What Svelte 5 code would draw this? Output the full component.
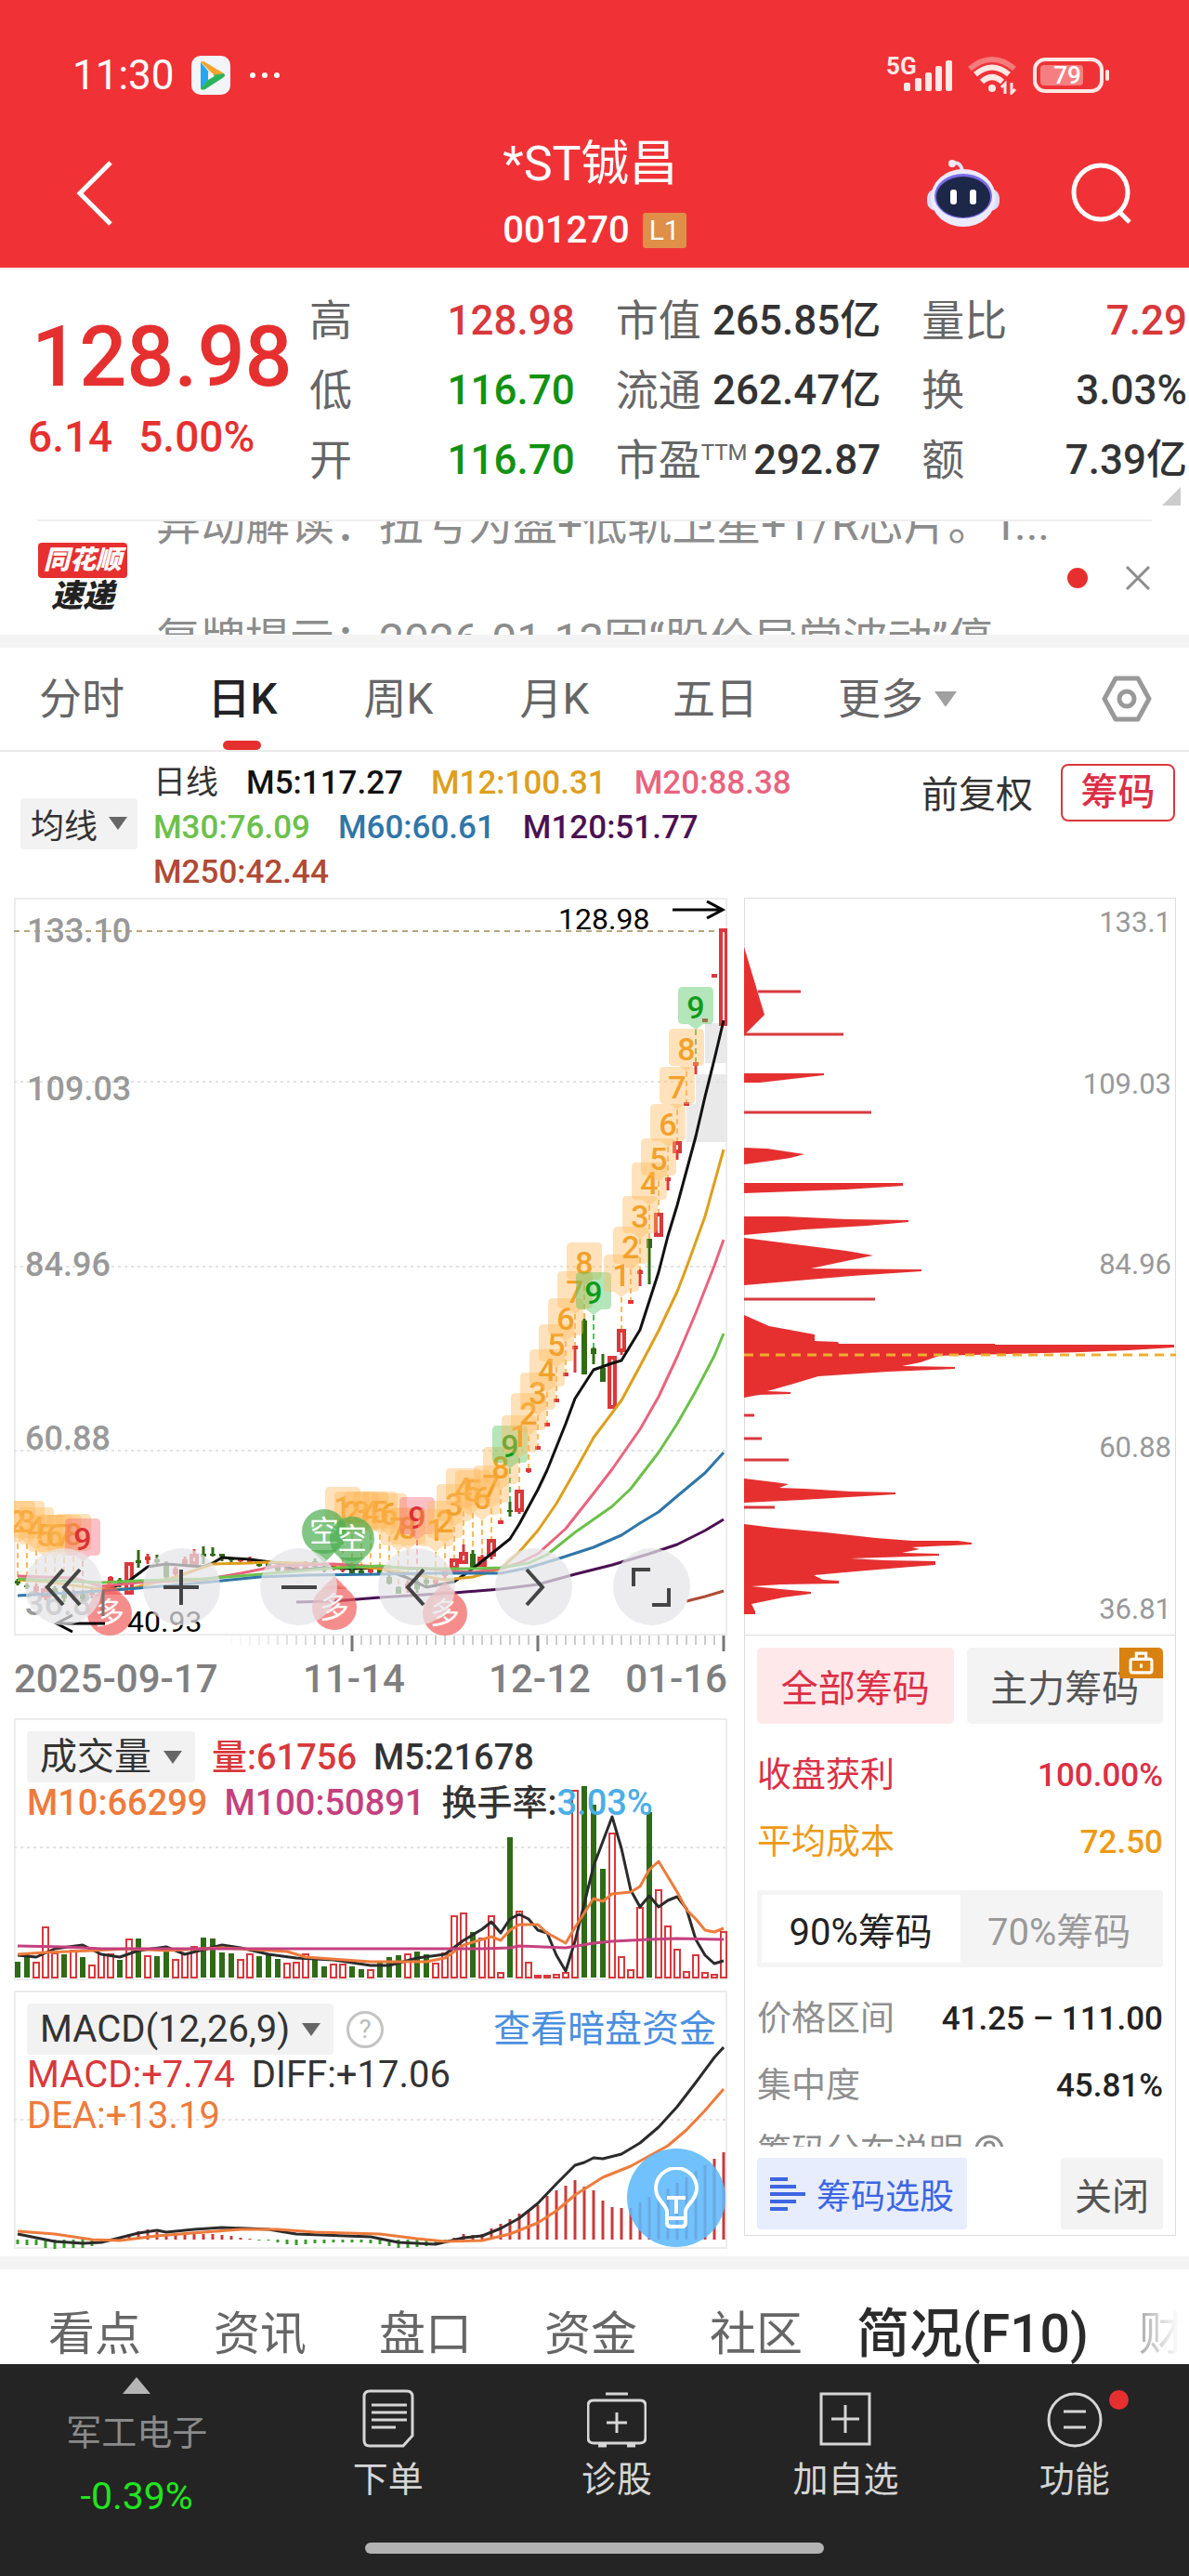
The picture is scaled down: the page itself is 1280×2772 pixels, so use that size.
<script lang="ts">
type Point = [number, number];
// index, high, low, body top, body bottom, rising
type Candle = [number, number, number, number, number, 0 | 1];
type Line = { color: string; points: Point[] };
type Mark = [number, number, number, "up" | "top" | "low"];

const RED = "#d9383c";
const GREEN = "#2f6b16";

const stats = [
  [
    { label: "高", value: "128.98", tone: "red" },
    { label: "低", value: "116.70", tone: "green" },
    { label: "开", value: "116.70", tone: "green" },
  ],
  [
    { label: "市值", value: "265.85亿", tone: "" },
    { label: "流通", value: "262.47亿", tone: "" },
    { label: "市盈", sup: "TTM", value: "292.87", tone: "" },
  ],
  [
    { label: "量比", value: "7.29", tone: "red" },
    { label: "换", value: "3.03%", tone: "" },
    { label: "额", value: "7.39亿", tone: "" },
  ],
];

const periods = ["分时", "日K", "周K", "月K", "五日"];
let period = $state("日K");

const averages = [
  { text: "日线", color: "#333" },
  { text: "M5:117.27", color: "#111" },
  { text: "M12:100.31", color: "#dd9f1c" },
  { text: "M20:88.38", color: "#e9637f" },
  { text: "M30:76.09", color: "#6cc04a" },
  { text: "M60:60.61", color: "#2f76a8" },
  { text: "M120:51.77", color: "#4b1152" },
  { text: "M250:42.44", color: "#b04a35" },
];

const candles: Candle[] = [
  [0, 733, 740, 735, 738, 0], [1, 738, 744, 740, 742, 0], [2, 738, 748, 741, 746, 1],
  [3, 740, 756, 744, 752, 1], [4, 741, 750, 743, 748, 0], [5, 745, 758, 748, 754, 0],
  [6, 745, 756, 747, 752, 1], [7, 748, 757, 750, 755, 0], [8, 744, 754, 746, 750, 1],
  [9, 742, 752, 744, 750, 1], [10, 730, 737, 731, 736, 1], [11, 732, 742, 734, 738, 0],
  [12, 716, 749, 716, 749, 1], [13, 702, 721, 713, 716, 0], [14, 706, 717, 709, 713, 1],
  [15, 707, 717, 712, 715, 0], [16, 714, 734, 718, 731, 0], [17, 720, 732, 722, 728, 1],
  [18, 709, 720, 712, 718, 1], [19, 701, 719, 707, 717, 1], [20, 698, 717, 706, 709, 0],
  [21, 699, 709, 706, 708, 0], [22, 706, 714, 706, 709, 0], [23, 710, 715, 710, 713, 0],
  [24, 710, 716, 711, 714, 1], [25, 709, 717, 711, 715, 1], [26, 712, 720, 715, 719, 0],
  [27, 714, 723, 716, 720, 0], [28, 718, 726, 720, 724, 0], [29, 719, 727, 721, 725, 1],
  [30, 718, 726, 720, 724, 1], [31, 714, 724, 718, 722, 1], [32, 711, 722, 714, 720, 0],
  [33, 718, 726, 720, 724, 0], [34, 716, 724, 718, 721, 1], [35, 719, 726, 721, 724, 1],
  [36, 722, 728, 723, 727, 0], [37, 723, 729, 724, 728, 0], [38, 720, 727, 722, 726, 1],
  [39, 719, 729, 722, 727, 0], [40, 728, 739, 731, 738, 0], [41, 741, 749, 742, 749, 0],
  [42, 735, 748, 738, 744, 1], [43, 733, 748, 736, 744, 0], [44, 731, 742, 734, 738, 0],
  [45, 732, 742, 734, 738, 1], [46, 722, 734, 724, 730, 1], [47, 711, 722, 712, 722, 1],
  [48, 696, 716, 705, 716, 1], [49, 702, 722, 706, 722, 0], [50, 707, 719, 710, 719, 1],
  [51, 691, 712, 691, 708, 1], [52, 670, 674, 670, 674, 1], [53, 650, 666, 659, 661, 0],
  [54, 638, 663, 638, 660, 1], [55, 614, 619, 614, 618, 1], [56, 590, 594, 590, 594, 1],
  [57, 565, 569, 565, 569, 1], [58, 539, 543, 539, 543, 1], [59, 511, 515, 511, 515, 1],
  [60, 482, 511, 482, 486, 1], [61, 453, 513, 455, 513, 0], [62, 484, 502, 485, 491, 0],
  [63, 491, 521, 506, 521, 0], [64, 493, 549, 494, 549, 1], [65, 464, 492, 465, 488, 1],
  [66, 433, 437, 433, 437, 1], [67, 400, 418, 401, 405, 1], [68, 367, 416, 367, 377, 0],
  [69, 340, 364, 340, 364, 1], [70, 301, 315, 301, 305, 1], [71, 263, 282, 263, 274, 1],
  [72, 220, 224, 220, 224, 1], [73, 177, 190, 177, 181, 1], [74, 130, 134, 130, 134, 1],
  [75, 82, 86, 82, 86, 1], [76, 34, 137, 34, 137, 1],
];

const priceLines: Line[] = [
  { color: "#111", points: [[9, 746], [10, 743], [12, 735], [14, 720], [16, 717], [20, 720], [21, 716], [22, 710], [25, 712], [28, 716], [30, 724], [33, 721], [36, 722], [39, 721], [42, 732], [44, 742], [47, 736], [49, 722], [51, 706], [53, 690], [54, 674], [56, 637], [57, 616], [59, 566], [60, 539], [62, 508], [64, 501], [65, 498], [67, 465], [68, 434], [69, 403], [70, 364], [71, 331], [72, 294], [73, 257], [74, 214], [75, 174], [76, 132]] },
  { color: "#dd9f1c", points: [[0, 734], [3, 736], [9, 744], [12, 744], [17, 731], [21, 717], [25, 716], [27, 715], [33, 717], [39, 722], [46, 734], [49, 731], [52, 722], [54, 704], [56, 681], [58, 652], [60, 617], [62, 581], [65, 541], [67, 504], [69, 466], [71, 424], [72, 398], [74, 343], [75, 307], [76, 271]] },
  { color: "#e9637f", points: [[0, 730], [6, 732], [9, 741], [13, 737], [20, 734], [24, 727], [28, 719], [34, 717], [39, 720], [44, 722], [49, 726], [52, 722], [54, 716], [56, 706], [59, 679], [62, 641], [64, 615], [67, 572], [69, 537], [71, 494], [73, 447], [75, 396], [76, 368]] },
  { color: "#6cc04a", points: [[0, 733], [9, 737], [13, 735], [20, 733], [25, 729], [33, 722], [39, 719], [42, 722], [49, 722], [52, 721], [55, 716], [57, 707], [60, 683], [62, 669], [64, 655], [66, 636], [69, 597], [71, 566], [73, 531], [75, 493], [76, 469]] },
  { color: "#2f76a8", points: [[0, 751], [9, 746], [13, 743], [20, 737], [26, 731], [31, 729], [39, 728], [44, 727], [52, 727], [55, 721], [58, 712], [62, 699], [65, 686], [67, 673], [69, 661], [71, 644], [74, 619], [76, 597]] },
  { color: "#4b1152", points: [[30, 758], [34, 757], [39, 753], [47, 748], [52, 744], [56, 739], [60, 728], [64, 718], [68, 706], [71, 696], [74, 681], [76, 669]] },
  { color: "#b04a35", points: [[72, 757], [74, 752], [76, 746]] },
];

// index, top edge, count, kind
const marks: Mark[] = [
  [0, 649, 2, "up"], [1, 649, 3, "up"], [2, 656, 4, "up"], [3, 664, 5, "up"], [4, 664, 6, "up"],
  [5, 664, 7, "up"], [6, 663, 8, "up"], [7, 668, 9, "low"],
  [35, 634, 1, "up"], [36, 639, 2, "up"], [37, 639, 3, "up"], [38, 639, 4, "up"], [39, 639, 5, "up"],
  [40, 641, 6, "up"], [41, 657, 7, "up"], [42, 656, 8, "up"], [43, 645, 9, "low"],
  [45, 658, 1, "up"], [46, 649, 2, "up"], [47, 631, 3, "up"], [48, 614, 4, "up"], [49, 616, 5, "up"],
  [50, 624, 6, "up"], [51, 611, 7, "up"], [52, 591, 8, "up"], [53, 568, 9, "top"],
  [54, 557, 1, "up"], [55, 533, 2, "up"], [56, 511, 3, "up"], [57, 486, 4, "up"], [58, 459, 5, "up"],
  [59, 431, 6, "up"], [60, 402, 7, "up"], [61, 371, 8, "up"], [62, 403, 9, "top"],
  [65, 384, 1, "up"], [66, 354, 2, "up"], [67, 321, 3, "up"], [68, 285, 4, "up"], [69, 259, 5, "up"],
  [70, 222, 6, "up"], [71, 182, 7, "up"], [72, 141, 8, "up"], [73, 96, 9, "top"],
];
const markFill = { up: "#ffb95c", top: "#4fc05a", low: "#f26a78" };
const markText = { up: "#f2a12a", top: "#0f9a1a", low: "#dc3036" };

const signals = [
  { x: 334, y: 682, text: "空", fill: "#4cae50", down: true },
  { x: 364, y: 690, text: "空", fill: "#4cae50", down: true },
  { x: 103, y: 770, text: "多", fill: "#f25c5c", down: false },
  { x: 345, y: 764, text: "多", fill: "#f25c5c", down: false },
  { x: 464, y: 770, text: "多", fill: "#f25c5c", down: false },
];

const volumes = [
  17, 27, 17, 55, 27, 25, 30, 22, 14, 26, 26, 19, 42, 42, 24, 23, 32, 20, 26, 34, 43, 42, 27, 26, 20, 26,
  23, 24, 20, 16, 17, 26, 21, 12, 15, 15, 12, 9, 9, 16, 22, 24, 26, 28, 25, 16, 27, 67, 70, 49, 43, 67,
  6, 151, 72, 17, 3, 3, 4, 6, 202, 206, 186, 117, 156, 23, 9, 76, 178, 95, 56, 31, 7, 25, 6, 4, 50,
];
const fallingDays = new Set([0, 1, 5, 7, 11, 13, 15, 16, 20, 21, 22, 23, 26, 27, 28, 32, 33, 36, 37, 39, 40, 41, 43, 44, 49, 53, 61, 62, 63, 68]);

const volumeLines: Line[] = [
  { color: "#2b2b2b", points: [[0, 255], [2, 257], [4, 248], [7, 244], [9, 254], [11, 257], [13, 250], [16, 246], [18, 254], [20, 249], [22, 244], [24, 247], [27, 254], [30, 258], [34, 260], [38, 266], [40, 266], [43, 258], [46, 254], [48, 239], [50, 227], [51, 219], [52, 231], [53, 216], [54, 211], [55, 216], [56, 228], [57, 231], [58, 255], [59, 272], [60, 240], [62, 159], [64, 106], [65, 140], [66, 185], [67, 203], [68, 191], [69, 203], [70, 196], [71, 192], [72, 205], [73, 238], [74, 255], [75, 264], [76, 261]] },
  { color: "#ee7b3c", points: [[0, 254], [3, 252], [8, 250], [12, 248], [16, 250], [22, 247], [29, 251], [31, 257], [38, 262], [44, 262], [46, 258], [48, 244], [51, 235], [52, 239], [53, 228], [54, 222], [56, 222], [57, 231], [59, 242], [60, 225], [62, 194], [63, 197], [64, 189], [66, 187], [67, 181], [68, 163], [69, 154], [71, 187], [72, 206], [73, 216], [74, 228], [75, 230], [76, 226]] },
  { color: "#c5407e", points: [[0, 245], [5, 246], [9, 248], [43, 248], [50, 248], [53, 247], [54, 245], [59, 247], [62, 242], [64, 240], [68, 238], [71, 237], [76, 238]] },
];

const macd = [
  -5, -6, -6, -9, -10, -9, -9, -9, -7, -3, 1, 3, 6, 9, 11, 8, 6, 6, 7, 7, 6, 6, 5, 4, 2, 1, -1, -1, -3, -5,
  -6, -5, -4, -4, -3, -3, -3, -3, -4, -5, -7, -9, -9, -8, -7, -4, -2, 2, 6, 5, 6, 12, 17, 22, 28, 31, 37,
  47, 53, 58, 64, 57, 53, 42, 35, 34, 34, 40, 46, 50, 55, 61, 67, 74, 80, 87, 94,
];
const macdLines: Line[] = [
  { color: "#2b2b2b", points: [[0, 262], [2, 266], [4, 270], [7, 272], [9, 271], [11, 266], [13, 261], [15, 258], [16, 260], [19, 257], [22, 255], [27, 257], [30, 262], [38, 265], [41, 271], [45, 273], [48, 266], [50, 264], [52, 256], [54, 245], [56, 229], [58, 208], [60, 188], [61, 185], [62, 180], [63, 181], [65, 176], [67, 164], [69, 147], [71, 125], [73, 99], [75, 72], [76, 61]] },
  { color: "#ee7b3c", points: [[0, 259], [4, 262], [8, 268], [11, 269], [15, 264], [20, 260], [24, 257], [28, 257], [32, 260], [39, 262], [43, 267], [46, 270], [50, 269], [53, 262], [56, 250], [58, 237], [60, 220], [63, 201], [66, 189], [68, 178], [70, 167], [72, 150], [74, 129], [76, 106]] },
];

const chipLabels = [
  { y: 37, text: "133.1" },
  { y: 211, text: "109.03" },
  { y: 405, text: "84.96" },
  { y: 602, text: "60.88" },
  { y: 776, text: "36.81" },
];

const infoTabs = ["看点", "资讯", "盘口", "资金", "社区", "简况(F10)", "财务"];
let infoTab = $state("简况(F10)");
let chipRange = $state(90);

const xAt = (i: number) => 4 + i * 10;
const toPoints = (points: Point[]) => points.map(([i, y]) => `${xAt(i)},${y}`).join(" ");
const ticks = Array.from({ length: 54 }, (_, n) => n + 23);
</script>

{#snippet caret()}
  <svg class="caret" viewBox="0 0 20 14" aria-hidden="true"><path d="M0 0h20L10 14z" fill="currentColor" /></svg>
{/snippet}

{#snippet lines(items: Line[])}
  {#each items as line}
    <polyline points={toPoints(line.points)} fill="none" stroke={line.color} stroke-width="3" stroke-linejoin="round" />
  {/each}
{/snippet}

<div class="page">
  <header>
    <div class="status">
      <span class="clock">11:30</span>
      <svg class="app" viewBox="0 0 42 42" aria-hidden="true">
        <rect width="42" height="42" rx="10" fill="#f3f4f8" />
        <path d="M10 7 22 21 10 36z" fill="#2aa5f0" />
        <path d="M10 7q2-2 5 0l20 12-7 5z" fill="#f7a32b" />
        <path d="M35 19q2 2 0 4L15 36q-4 2-5-1l12-14z" fill="#2db45a" />
        <path d="M18 17v9l7-4z" fill="#f3f4f8" />
      </svg>
      <svg class="more-dots" viewBox="0 0 34 8" aria-hidden="true"><circle cx="4" cy="4" r="3" /><circle cx="17" cy="4" r="3" /><circle cx="30" cy="4" r="3" /></svg>
      <span class="grow"></span>
      <svg class="signal" viewBox="0 0 72 42" aria-hidden="true">
        <text x="0" y="20">5G</text>
        <g fill="#fde8e4"><rect x="19" y="29" width="7" height="9" rx="2" /><rect x="31" y="24" width="7" height="14" rx="2" /><rect x="42" y="18" width="7" height="20" rx="2" /><rect x="53" y="11" width="7" height="27" rx="2" /><rect x="64" y="5" width="7" height="33" rx="2" /></g>
      </svg>
      <svg class="wifi" viewBox="0 0 54 42" fill="none" stroke="#fde8e4" stroke-width="6" aria-hidden="true">
        <path d="M3 14Q27-6 51 14" opacity=".4" />
        <path d="M9 20Q27 5 45 20" />
        <path d="M16 28Q27 18 38 28" />
        <circle cx="27" cy="35" r="4" fill="#fde8e4" stroke="none" />
        <path d="M41 41V30l-4 4M48 29v11l4-4" stroke-width="3" />
      </svg>
      <svg class="battery" viewBox="0 0 84 38" aria-hidden="true">
        <rect x="2" y="2" width="72" height="34" rx="11" fill="none" stroke="#fde8e4" stroke-width="4" />
        <rect x="8" y="8" width="46" height="22" rx="4" fill="#f57f80" />
        <rect x="78" y="13" width="4" height="12" rx="2" fill="#fde8e4" />
        <text x="37" y="28" text-anchor="middle">79</text>
      </svg>
    </div>
    <div class="title-bar">
      <button class="icon-button back" aria-label="返回">
        <svg viewBox="0 0 40 70" fill="none" stroke="#fff" stroke-width="5"><path d="M37 2 4 35l33 33" /></svg>
      </button>
      <div class="title">
        <h1>*ST铖昌</h1>
        <div class="code">001270 <span class="level">L1</span></div>
      </div>
      <div class="actions">
        <button class="icon-button robot" aria-label="助手">
          <svg viewBox="0 0 78 74">
            <path d="M27 5q9-3 11 8" fill="none" stroke="#e3e1fb" stroke-width="4" />
            <circle cx="27" cy="5" r="4" fill="#f3e9fb" />
            <rect x="0" y="32" width="78" height="24" rx="10" fill="#dcdcf8" />
            <ellipse cx="39" cy="42" rx="35" ry="31" fill="#eceafe" />
            <ellipse cx="39" cy="40" rx="31" ry="24" fill="#7a6be8" />
            <ellipse cx="39" cy="41" rx="29" ry="22" fill="#1d2748" />
            <rect x="25" y="33" width="7" height="16" rx="3" fill="#fff" /><rect x="46" y="33" width="7" height="16" rx="3" fill="#fff" />
          </svg>
        </button>
        <button class="icon-button search" aria-label="搜索">
          <svg viewBox="0 0 68 66" fill="none" stroke="#fff" stroke-width="5"><circle cx="33" cy="32" r="29" /><path d="m52 52 12 12" /></svg>
        </button>
      </div>
    </div>
  </header>

  <section class="quote">
    <div class="last">
      <div class="price">128.98</div>
      <div class="change"><span>6.14</span><span>5.00%</span></div>
    </div>
    <div class="stats">
      {#each stats as column}
        <dl>
          {#each column as item}
            <div>
              <dt>{item.label}{#if item.sup}<sup>{item.sup}</sup>{/if}</dt>
              <dd class={item.tone}>{item.value}</dd>
            </div>
          {/each}
        </dl>
      {/each}
    </div>
    <svg class="expand" viewBox="0 0 20 20" aria-hidden="true"><path d="M20 0v20H0z" fill="#ccc" /></svg>
  </section>

  <section class="ticker">
    <div class="brand"><span class="brand-name">同花顺</span><span class="brand-sub">速递</span></div>
    <div class="news">
      <p>异动解读：扭亏为盈+低轨卫星+T/R芯片。T...</p>
      <p>复牌提示：2026-01-13因“股价异常波动”停</p>
    </div>
    <span class="dot"></span>
    <button class="icon-button close" aria-label="关闭">
      <svg viewBox="0 0 26 26" fill="none" stroke="#8c8c8c" stroke-width="3"><path d="m1 1 24 24M25 1 1 25" /></svg>
    </button>
  </section>

  <nav class="periods">
    {#each periods as name}
      <button class:active={period === name} onclick={() => (period = name)}>{name}</button>
    {/each}
    <button class="more">更多{@render caret()}</button>
    <button class="icon-button settings" aria-label="设置">
      <svg viewBox="0 0 54 50" fill="none" stroke="#999" stroke-width="5" stroke-linejoin="round"><path d="M15 3h24l12 22-12 22H15L3 25z" /><circle cx="27" cy="25" r="8" /></svg>
    </button>
  </nav>

  <section class="averages">
    <button class="picker">均线{@render caret()}</button>
    <div class="legend">
      {#each averages as item}
        <span style:color={item.color}>{item.text}</span>
      {/each}
    </div>
    <button class="adjust">前复权</button>
    <button class="chips-toggle">筹码</button>
  </section>

  <section class="charts">
    <div class="left">
      <div class="frame">
        <svg viewBox="0 0 768 794">
          <g fill="#e9e9e9"><rect x="744" y="135" width="24" height="43" /><rect x="734" y="190" width="34" height="32" /><rect x="724" y="222" width="44" height="41" /></g>
          <path d="M0 36h768" stroke="#b3a57c" stroke-width="2" stroke-dasharray="6 5" />
          <path d="M0 198h768M0 397h768M0 595h768" stroke="#e2e2e2" stroke-width="2" stroke-dasharray="3 4" />
          <g class="scale">
            <text x="14" y="48">133.10</text>
            <text x="14" y="218">109.03</text>
            <text x="12" y="407">84.96</text>
            <text x="12" y="594">60.88</text>
            <text x="12" y="772">36.81</text>
          </g>
          {#each marks as [i, top, , kind]}
            <path d="M{xAt(i)} {top + 46}V{candles[i][1]}" stroke={markFill[kind]} stroke-width="2" stroke-dasharray="6 4" />
          {/each}
          {#each candles as [i, high, low, top, bottom, up]}
            <path d="M{xAt(i)} {high}V{low}" stroke={up ? RED : GREEN} stroke-width="3" />
            {#if up && bottom - top > 7}
              <rect x={xAt(i) - 3} y={top + 1} width="6" height={bottom - top - 2} fill="#fbe3e3" stroke={RED} stroke-width="4" />
            {:else}
              <rect x={xAt(i) - 3} y={top} width="6" height={bottom - top} fill={up ? RED : GREEN} />
            {/if}
          {/each}
          {@render lines(priceLines)}
          {#each marks as [i, top, count, kind]}
            <g class="mark">
              <path d="M{xAt(i) - 14} {top}h28q5 0 5 5v30q0 5-5 5h-6l-8 6-8-6h-6q-5 0-5-5v-30q0-5 5-5z" fill={markFill[kind]} opacity=".42" />
              <text x={xAt(i)} y={top + 34} text-anchor="middle" fill={markText[kind]}>{count}</text>
            </g>
          {/each}
          {#each signals as signal}
            <g class="signal-pin">
              <circle cx={signal.x} cy={signal.y} r="24" fill={signal.fill} opacity=".7" />
              <path d={signal.down ? `M${signal.x - 14} ${signal.y + 20}h28l-14 14z` : `M${signal.x - 14} ${signal.y - 20}h28l-14-14z`} fill={signal.fill} opacity=".7" />
              <text x={signal.x} y={signal.y + 11} text-anchor="middle">{signal.text}</text>
            </g>
          {/each}
          <g fill="none" stroke="#000" stroke-width="3"><path d="M709 13h53M746 4l17 9-17 9M98 781H46M63 772l-17 9 17 9" /></g>
          <path d="M96 746v27" stroke="#777" stroke-width="3" />
          <g class="extreme"><text x="586" y="34">128.98</text><text x="122" y="790">40.93</text></g>
        </svg>
        <div class="tools">
          <button aria-label="最左"><svg viewBox="0 0 42 42"><path d="M20 2 3 21l17 19M38 2 21 21l17 19" /></svg></button>
          <button aria-label="放大"><svg viewBox="0 0 42 42"><path d="M2 21h38M21 2v38" /></svg></button>
          <button aria-label="缩小"><svg viewBox="0 0 42 42"><path d="M2 21h38" /></svg></button>
          <button aria-label="左移"><svg viewBox="0 0 42 42"><path d="M29 2 12 21l17 19" /></svg></button>
          <button aria-label="右移"><svg viewBox="0 0 42 42"><path d="m13 2 17 19-17 19" /></svg></button>
          <button aria-label="全屏"><svg viewBox="0 0 42 42"><path d="M2 20V2h18M40 22v18H22" /></svg></button>
        </div>
      </div>

      <svg class="axis" viewBox="0 0 768 89">
        {#each ticks as i}
          <path d="M{xAt(i)} 0V{(76 - i) % 20 === 0 ? 17 : 10}" stroke={(76 - i) % 20 === 0 ? "#777" : "#999"} stroke-width={(76 - i) % 20 === 0 ? 3 : 1} opacity={Math.min(1, (i - 22) / 12)} />
        {/each}
        <text x="0" y="61" fill="#666">2025-09-17</text>
        <text x="366" y="61" text-anchor="middle">11-14</text>
        <text x="566" y="61" text-anchor="middle">12-12</text>
        <text x="768" y="61" text-anchor="end">01-16</text>
      </svg>

      <div class="frame volume">
        <svg viewBox="0 0 768 282">
          <path d="M0 139h768" stroke="#e2e2e2" stroke-width="2" stroke-dasharray="3 4" />
          {#each volumes as height, i}
            {#if fallingDays.has(i)}
              <rect x={xAt(i) - 3} y={279 - height} width="6" height={height} fill={GREEN} />
            {:else}
              <rect x={xAt(i) - 3} y={280 - height} width="6" height={height - 1} fill="#fff" stroke={RED} stroke-width="2" />
            {/if}
          {/each}
          {@render lines(volumeLines)}
        </svg>
        <div class="readout">
          <button class="picker">成交量{@render caret()}</button>
          <span class="red">量:61756</span>
          <span>M5:21678</span>
          <div class="line">
            <span class="orange">M10:66299</span>
            <span class="magenta">M100:50891</span>
            <span>换手率:<span class="sky">3.03%</span></span>
          </div>
        </div>
      </div>

      <div class="frame macd">
        <svg viewBox="0 0 768 278">
          <path d="M0 139h768" stroke="#eadfe2" stroke-width="2" stroke-dasharray="3 4" />
          {#each macd as value, i}
            <path d="M{xAt(i)} 268v{-value}" stroke={value > 0 ? "#c93a3a" : "#3d9a2f"} stroke-width="3" />
          {/each}
          {@render lines(macdLines)}
        </svg>
        <div class="readout">
          <button class="picker">MACD(12,26,9){@render caret()}</button>
          <button class="icon-button help" aria-label="说明">?</button>
          <a href="#funds">查看暗盘资金</a>
          <div class="line">
            <span class="red">MACD:+7.74</span>
            <span>DIFF:+17.06</span>
          </div>
          <div class="line"><span class="orange">DEA:+13.19</span></div>
        </div>
        <button class="icon-button hint" aria-label="提示">
          <svg viewBox="0 0 48 66" fill="none" stroke="#fff" stroke-width="4" stroke-linejoin="round">
            <path d="M14 48c0-8-12-12-12-25a22 22 0 0 1 44 0c0 13-12 17-12 25v12q0 4-4 4H18q-4 0-4-4zM14 55h20M14 33h20M24 33v17" />
          </svg>
        </button>
      </div>
    </div>

    <aside class="chips">
      <svg class="distribution" viewBox="0 0 465 793">
        <g fill="#e63030">
          <path d="M0 53 22 126 2 146H0z" />
          <path d="M0 189 86 189V191L17 199H0z" />
          <path d="M0 269 25 270 65 276 50 280 30 283 0 287z" />
          <path d="M0 307H171V310L110 314 0 318z" />
          <path d="M0 343H45L110 346 177 347V349L132 353 65 357 0 363z" />
          <path d="M0 366 47 372 110 380 139 385 100 393 72 399 191 400V402L116 407 0 417z" />
          <path d="M0 449 27 461 76 470V477L101 478 102 480H270V481H463V484L414 487 363 489 210 493 190 500 170 504 227 505V507L155 510 80 515 50 524 25 531 50 532V534L16 535 0 538z" />
          <path d="M0 625 33 629 48 631 38 635 65 636 115 639 163 640V642L130 644 62 648 0 651z" />
          <path d="M0 674 32 678 88 683 142 689 181 692H230L245 694V696L181 699 189 701 170 705 210 706V708L115 711 150 713 206 714V718L180 720 120 725 75 729 85 734 102 735V738L40 739 8 741 50 745 72 747V749L42 753 8 760 12 768V771H0z" />
        </g>
        <path d="M15 101H61M0 147H107M0 231H137M0 432H141M0 557H11M0 582H19M0 605H48M0 656H33" stroke="#d9383c" stroke-width="3" />
        <path d="M0 492H465" stroke="#efaf2e" stroke-width="3" stroke-dasharray="10 7" />
        {#each chipLabels as label}
          <text x="460" y={label.y} text-anchor="end">{label.text}</text>
        {/each}
      </svg>
      <div class="chip-info">
        <div class="chip-tabs">
          <button class="active">全部筹码</button>
          <button>
            主力筹码
            <span class="lock"><svg viewBox="0 0 26 26" fill="none" stroke="#fff" stroke-width="3"><rect x="2" y="9" width="22" height="14" rx="2" /><path d="M8 9V3h10v6M13 14v4" /></svg></span>
          </button>
        </div>
        <div class="row profit"><span>收盘获利</span><b>100.00%</b></div>
        <div class="row cost"><span>平均成本</span><b>72.50</b></div>
        <div class="segment">
          <button class:active={chipRange === 90} onclick={() => (chipRange = 90)}>90%筹码</button>
          <button class:active={chipRange === 70} onclick={() => (chipRange = 70)}>70%筹码</button>
        </div>
        <div class="row"><span>价格区间</span><b>41.25 – 111.00</b></div>
        <div class="row"><span>集中度</span><b>45.81%</b></div>
        <div class="note">
          筹码分布说明
          <svg viewBox="0 0 32 32" fill="none" stroke="#8c8c8c" stroke-width="3"><circle cx="16" cy="16" r="14" /><path d="M11 13q0-5 5-5t5 5q0 3-5 6v2" /></svg>
        </div>
        <div class="chip-actions">
          <button class="pick">
            <svg viewBox="0 0 38 36" aria-hidden="true"><path d="M0 2h19M0 10h28M0 18h38M0 26h28M0 34h19" stroke="currentColor" stroke-width="4" /></svg>筹码选股
          </button>
          <button class="shut">关闭</button>
        </div>
      </div>
    </aside>
  </section>

  <nav class="info-tabs">
    {#each infoTabs as name}
      <button class:active={infoTab === name} onclick={() => (infoTab = name)}>{name}</button>
    {/each}
  </nav>

  <footer>
    <div class="dock">
      <button class="sector">
        <svg viewBox="0 0 30 18" aria-hidden="true"><path d="M15 0 30 18H0z" fill="#b5b5b5" /></svg>
        <span>军工电子</span>
        <span class="drop">-0.39%</span>
      </button>
      <button>
        <svg viewBox="0 0 64 64"><path d="M12 3h40q6 0 6 6v42L48 62H12q-6 0-6-6V9q0-6 6-6zM14 18h38M14 26h38M14 34h38M14 42h26" /></svg>
        下单
      </button>
      <button>
        <svg viewBox="0 0 64 64"><path d="M7 13h50q6 0 6 6v34q0 6-6 6H7q-6 0-6-6V19q0-6 6-6zM20 6h24M32 26v22M21 37h22M12 62h9M43 62h9" /></svg>
        诊股
      </button>
      <button>
        <svg viewBox="0 0 64 64"><path d="M6 6h52v54H6zM32 18v30M17 33h30" /></svg>
        加自选
      </button>
      <button>
        <span class="badge"></span>
        <svg viewBox="0 0 64 64"><circle cx="32" cy="34" r="28" /><path d="M20 25h24M20 42h24" /></svg>
        功能
      </button>
    </div>
    <div class="home"></div>
  </footer>
</div>

<style>
  :global(body) {
    margin: 0;
    background: #fff;
  }
  .page {
    font-family: Roboto, "Noto Sans CJK SC", sans-serif;
    color: #333;
    overflow: hidden;
  }
  button {
    border: 0;
    margin: 0;
    padding: 0;
    background: none;
    font: inherit;
    color: inherit;
    white-space: nowrap;
  }
  svg {
    display: block;
    flex: none;
  }
  .icon-button {
    display: flex;
    align-items: center;
    justify-content: center;
  }
  .grow { flex: 1; }
  .red { color: #d9383c; }
  .green { color: #129212; }
  .orange { color: #ee7b3c; }
  .magenta { color: #c5407e; }
  .sky { color: #4aaee8; }

  header {
    background: #f03237;
    color: #fff;
  }
  .status {
    display: flex;
    align-items: center;
    height: 94px;
    padding: 34px 84px 0 78px;
  }
  .clock {
    font-size: 44px;
    margin-right: 18px;
  }
  .app { width: 42px; margin-right: 20px; }
  .more-dots { width: 34px; fill: #fff; }
  .signal { width: 72px; margin-right: 15px; overflow: visible; }
  .signal text {
    font-size: 26px;
    font-weight: 700;
    fill: #fde8e4;
  }
  .wifi { width: 54px; margin-right: 17px; }
  .battery { width: 84px; }
  .battery text {
    font-size: 26px;
    font-weight: 500;
    fill: #fff;
  }
  .title-bar {
    display: grid;
    grid-template-columns: 1fr auto 1fr;
    align-items: center;
    height: 160px;
    padding: 0 60px 0 82px;
  }
  .back { justify-self: start; }
  .back svg { width: 40px; }
  .title { margin: 4px 0 0 -22px; }
  h1 {
    margin: 0 0 12px;
    font-size: 52px;
    font-weight: 400;
    line-height: 64px;
  }
  .code {
    display: flex;
    align-items: center;
    gap: 14px;
    font-size: 40px;
    font-weight: 500;
    line-height: 54px;
  }
  .level {
    padding: 0 7px;
    background: #e08f48;
    border-radius: 3px;
    font-size: 30px;
    font-weight: 400;
    line-height: 38px;
  }
  .actions {
    display: flex;
    justify-content: flex-end;
    gap: 76px;
  }
  .robot svg { width: 78px; }
  .search svg { width: 68px; }

  .quote {
    position: relative;
    display: flex;
    padding: 20px 2px 26px 30px;
  }
  .last {
    width: 303px;
    padding-top: 28px;
    color: #e63030;
  }
  .price {
    padding-left: 4px;
    font-size: 90px;
    font-weight: 500;
    line-height: 98px;
  }
  .change {
    display: flex;
    gap: 28px;
    margin-top: 8px;
    font-size: 46px;
    font-weight: 500;
    line-height: 56px;
  }
  .stats {
    flex: 1;
    display: grid;
    grid-template-columns: repeat(3, 1fr);
    gap: 44px;
  }
  dl { margin: 0; }
  dl div {
    display: flex;
    justify-content: space-between;
    height: 75px;
    line-height: 75px;
    white-space: nowrap;
  }
  dt {
    font-size: 46px;
    color: #666;
  }
  sup {
    font-size: 24px;
    line-height: 0;
  }
  dd {
    margin: 0;
    font-size: 44px;
    font-weight: 500;
  }
  .expand {
    position: absolute;
    right: 9px;
    bottom: 15px;
    width: 20px;
  }

  .ticker {
    display: flex;
    align-items: center;
    height: 122px;
    margin: 0 40px;
    border-top: 2px solid #eee;
    overflow: hidden;
  }
  .brand {
    display: flex;
    flex-direction: column;
    align-items: center;
    width: 98px;
    margin-right: 30px;
    font-style: italic;
    font-weight: 900;
    line-height: 38px;
  }
  .brand-name {
    padding: 0 6px;
    background: #e63030;
    border-radius: 4px;
    color: #fff;
    font-size: 28px;
  }
  .brand-sub {
    color: #222;
    font-size: 34px;
  }
  .news {
    flex: 1;
    align-self: flex-start;
    margin-top: -58px;
    font-size: 48px;
    line-height: 124px;
    color: #8c8c8c;
    white-space: nowrap;
  }
  .news p { margin: 0; }
  .dot {
    width: 22px;
    height: 22px;
    margin-right: 41px;
    border-radius: 50%;
    background: #e63030;
  }
  .close { margin-right: 2px; }
  .close svg { width: 26px; }

  .periods {
    display: flex;
    align-items: center;
    gap: 86px;
    height: 110px;
    padding: 0 40px 0 42px;
    border-top: 14px solid #f4f4f4;
    border-bottom: 2px solid #eaeaea;
    font-size: 46px;
    color: #666;
  }
  .periods button {
    min-width: 82px;
    line-height: 110px;
  }
  .periods .active {
    position: relative;
    color: #222;
    font-weight: 500;
  }
  .periods .active::after {
    content: "";
    position: absolute;
    left: 50%;
    bottom: 0;
    width: 41px;
    height: 10px;
    margin-left: -21px;
    border-radius: 5px;
    background: #e63030;
  }
  .caret {
    width: 20px;
    color: #666;
  }
  .more {
    display: flex;
    align-items: center;
    gap: 12px;
  }
  .more .caret { width: 24px; color: #a0a0a0; }
  .periods .settings {
    min-width: 54px;
    margin-left: auto;
  }
  .settings svg { width: 54px; }

  .averages {
    display: flex;
    align-items: flex-start;
    padding: 0 15px 3px 22px;
  }
  .picker {
    display: flex;
    align-items: center;
    gap: 13px;
    height: 55px;
    background: #f2f2f2;
    border-radius: 4px;
  }
  .averages .picker {
    align-self: center;
    gap: 12px;
    padding: 0 11px;
    margin-right: 17px;
    font-size: 36px;
  }
  .legend {
    flex: 1;
    display: flex;
    flex-wrap: wrap;
    column-gap: 30px;
    padding: 10px 70px 0 0;
    font-size: 35px;
    font-weight: 500;
    line-height: 48px;
  }
  .legend span:first-child { font-weight: 400; }
  .adjust {
    margin: 11px 30px 0 0;
    font-size: 40px;
    line-height: 72px;
  }
  .chips-toggle {
    width: 123px;
    height: 62px;
    margin-top: 13px;
    border: 2px solid #d9383c;
    border-radius: 8px;
    color: #dc2f45;
    font-size: 40px;
    font-weight: 500;
    line-height: 56px;
  }

  .charts {
    display: flex;
    align-items: flex-start;
    gap: 18px;
    padding: 0 14px 8px 15px;
    border-bottom: 14px solid #f4f4f4;
  }
  .left {
    flex: 768;
    min-width: 0;
  }
  .frame {
    position: relative;
    box-shadow: inset 0 0 0 2px #ececec;
  }
  .frame > svg, .axis, .distribution { width: 100%; }
  .scale text {
    font-size: 36px;
    font-weight: 500;
    fill: #999;
  }
  .extreme text { font-size: 32px; }
  .mark text {
    font-size: 34px;
    font-weight: 500;
  }
  .signal-pin text {
    font-size: 32px;
    fill: #fff;
  }
  .tools {
    position: absolute;
    left: 12px;
    right: 40px;
    bottom: 11px;
    display: flex;
    justify-content: space-between;
  }
  .tools button {
    display: flex;
    align-items: center;
    justify-content: center;
    width: 83px;
    height: 83px;
    border-radius: 50%;
    background: rgba(228, 228, 231, 0.72);
  }
  .tools svg {
    width: 42px;
    fill: none;
    stroke: #444;
    stroke-width: 4;
  }
  .axis text {
    font-size: 42px;
    font-weight: 500;
    fill: #808080;
  }
  .readout {
    position: absolute;
    left: 14px;
    top: 14px;
    right: 12px;
    display: flex;
    flex-wrap: wrap;
    align-items: center;
    column-gap: 18px;
    font-size: 38px;
    font-weight: 500;
    line-height: 44px;
  }
  .readout .picker {
    padding: 0 14px;
    font-size: 40px;
    font-weight: 400;
  }
  .line {
    display: flex;
    gap: 18px;
    width: 100%;
  }
  .macd { margin-top: 11px; }
  .macd .readout {
    column-gap: 14px;
    font-size: 40px;
    font-weight: 400;
  }
  .help {
    width: 40px;
    height: 40px;
    border: 3px solid #c4c4c4;
    border-radius: 50%;
    color: #bbb;
    font-size: 28px;
    line-height: 34px;
  }
  .readout a {
    margin-left: auto;
    color: #4a8fe0;
    text-decoration: none;
  }
  .hint {
    position: absolute;
    right: 2px;
    bottom: 2px;
    width: 106px;
    height: 106px;
    border-radius: 50%;
    background: rgba(92, 184, 252, 0.88);
  }
  .hint svg { width: 48px; }

  .chips {
    flex: 465;
    min-width: 0;
    box-shadow: inset 0 0 0 1px #ddd;
  }
  .distribution { border-bottom: 1px solid #ddd; }
  .distribution text {
    font-size: 31px;
    fill: #999;
  }
  .chip-info {
    padding: 13px 14px 7px;
    font-size: 37px;
  }
  .chip-tabs {
    display: grid;
    grid-template-columns: 1fr 1fr;
    gap: 14px;
    margin-bottom: 20px;
  }
  .chip-tabs button {
    position: relative;
    height: 82px;
    background: #f3f3f3;
    border-radius: 5px;
    color: #555;
    font-size: 40px;
  }
  .chip-tabs .active {
    background: #fee8ea;
    color: #dc2f45;
  }
  .lock {
    position: absolute;
    top: 0;
    right: 0;
    display: flex;
    justify-content: center;
    width: 47px;
    padding: 3px 0;
    background: #d9820f;
    border-radius: 0 5px 0 3px;
  }
  .lock svg { width: 27px; }
  .row {
    display: flex;
    justify-content: space-between;
    line-height: 72px;
    color: #8f8f8f;
  }
  .row b {
    color: #222;
    font-size: 35px;
    font-weight: 500;
  }
  .profit, .profit b { color: #dc2f45; }
  .cost, .cost b { color: #ee9a14; }
  .segment {
    display: grid;
    grid-template-columns: 1fr 1fr;
    margin: 15px 0 20px;
    padding: 5px;
    background: #f4f4f4;
    border-radius: 4px;
  }
  .segment button {
    height: 73px;
    color: #999;
    font-size: 40px;
  }
  .segment .active {
    background: #fff;
    color: #222;
  }
  .note {
    display: flex;
    align-items: flex-start;
    gap: 12px;
    height: 29px;
    margin-bottom: 12px;
    overflow: hidden;
    line-height: 70px;
    color: #8c8c8c;
  }
  .note svg { width: 32px; margin-top: 16px; }
  .chip-actions {
    display: flex;
    justify-content: space-between;
  }
  .chip-actions button {
    height: 77px;
    border-radius: 4px;
  }
  .pick {
    display: flex;
    align-items: center;
    gap: 12px;
    padding: 0 14px;
    background: #e8edfd;
    color: #3c66e2;
  }
  .pick svg { width: 38px; }
  .shut {
    padding: 0 15px;
    background: #f3f3f3;
    color: #555;
    font-size: 40px;
  }

  .info-tabs {
    display: flex;
    align-items: center;
    gap: 38px;
    height: 64px;
    padding: 38px 0 0 32px;
    overflow: hidden;
    color: #666;
    font-size: 50px;
    line-height: 64px;
    mask-image: linear-gradient(to left, transparent 10px, #000 90px);
  }
  .info-tabs button { padding: 0 20px; }
  .info-tabs .active {
    padding: 0;
    color: #2b2b2b;
    font-size: 57px;
    font-weight: 500;
  }
  .info-tabs button:last-child { padding: 0 16px; }

  footer {
    height: 228px;
    background: #242424;
    color: #d6d6d6;
  }
  .dock {
    display: grid;
    grid-template-columns: 294fr 246fr 246fr 246fr 246fr;
    height: 192px;
  }
  .dock button {
    position: relative;
    display: flex;
    flex-direction: column;
    align-items: center;
    padding-top: 26px;
    font-size: 38px;
    line-height: 64px;
  }
  .dock svg {
    width: 64px;
    margin-bottom: 2px;
    fill: none;
    stroke: #d6d6d6;
    stroke-width: 3;
  }
  .dock .sector {
    padding-top: 14px;
    color: #8a8a8a;
    line-height: 68px;
  }
  .dock .sector svg {
    width: 30px;
    margin-bottom: 8px;
    stroke: none;
  }
  .drop {
    color: #1fe51f;
    font-size: 41px;
  }
  .badge {
    position: absolute;
    top: 28px;
    left: 160px;
    width: 21px;
    height: 21px;
    border-radius: 50%;
    background: #e63030;
  }
  .home {
    width: 494px;
    height: 12px;
    margin: 0 auto;
    border-radius: 6px;
    background: #b3b3b3;
  }
</style>
